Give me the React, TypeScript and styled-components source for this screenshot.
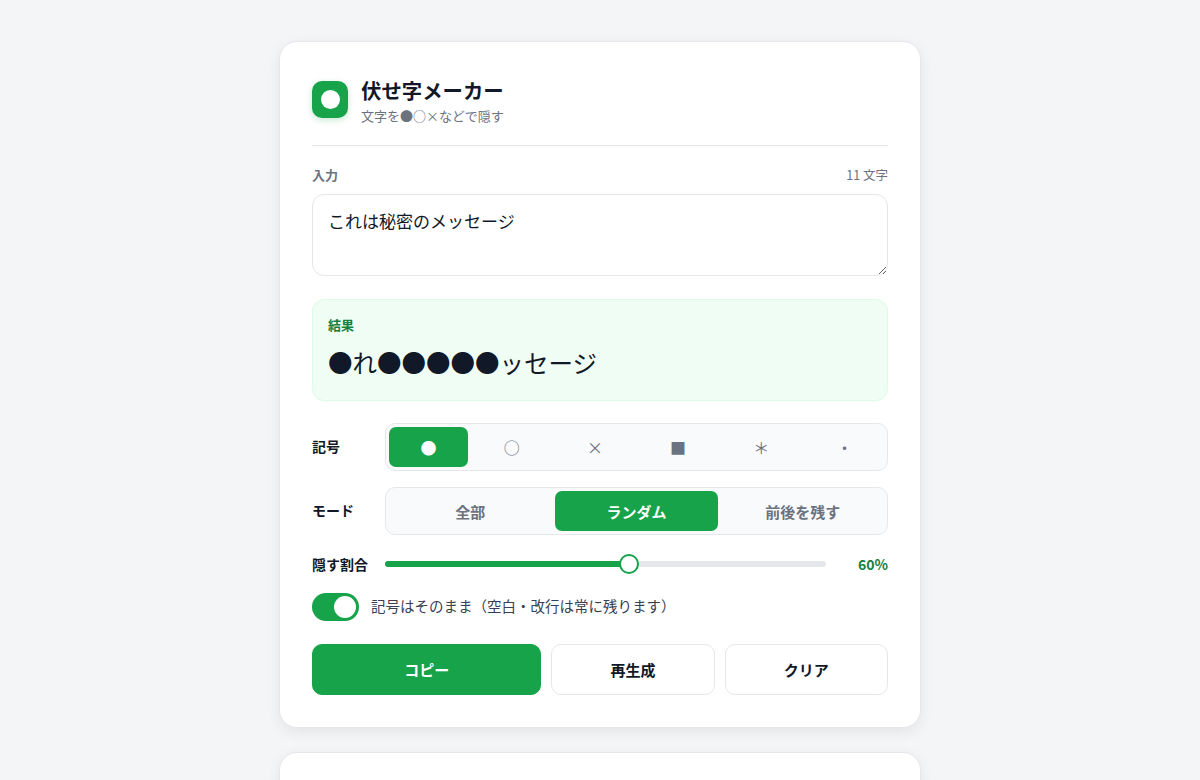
import React from "react";
import styled, { createGlobalStyle } from "styled-components";

const GlobalStyle = createGlobalStyle`
  html, body {
    margin: 0;
    padding: 0;
    background: #f4f5f7;
    height: 780px;
    overflow: hidden;
  }
  * { box-sizing: border-box; }
  body {
    font-family: "Noto Sans CJK JP", Inter, sans-serif;
    color: #111827;
  }
`;

const Page = styled.main`
  width: 642px;
  margin: 0 auto;
  padding-top: 41px;
  display: flex;
  flex-direction: column;
  gap: 24px;
`;

const Card = styled.section`
  background: #fff;
  border: 1px solid #e5e7eb;
  border-radius: 18px;
  box-shadow: 0 4px 14px rgba(0, 0, 0, 0.07);
  padding: 34px 32px 32px;
`;

const EmptyCard = styled(Card)`
  height: 200px;
  flex: none;
`;

const Header = styled.header`
  display: flex;
  align-items: flex-start;
  gap: 13px;
  padding-bottom: 20px;
  border-bottom: 1px solid #e5e7eb;
`;

const Logo = styled.div`
  width: 36px;
  height: 37px;
  margin-top: 5px;
  border-radius: 10px;
  background: #16a34a;
  box-shadow: 0 2px 6px rgba(22, 163, 74, 0.25);
  display: flex;
  align-items: center;
  justify-content: center;

  &::after {
    content: "";
    width: 19px;
    height: 19px;
    border-radius: 50%;
    background: #fff;
  }
`;

const HeaderText = styled.div`
  display: flex;
  flex-direction: column;
  gap: 2px;
`;

const Title = styled.h1`
  margin: 0;
  font-size: 20.4px;
  line-height: 28px;
  font-weight: 700;
`;

const Subtitle = styled.p`
  margin: 0;
  font-size: 13px;
  line-height: 19px;
  color: #6b7280;
`;

const FieldHead = styled.div`
  display: flex;
  justify-content: space-between;
  align-items: center;
  margin-top: 18px;
  height: 20px;
  color: #6b7280;
`;

const FieldLabel = styled.span`
  font-size: 13px;
  font-weight: 700;
`;

const CharCount = styled.span`
  font-size: 12.5px;
`;

const TextArea = styled.textarea`
  display: block;
  width: 100%;
  height: 82px;
  margin-top: 10px;
  padding: 13px 15px;
  border: 1px solid #e5e7eb;
  border-radius: 12px;
  background: #fff;
  color: #111827;
  font: 400 17px/26px "Noto Sans CJK JP", Inter, sans-serif;
  outline: none;
  resize: vertical;
`;

const ResultBox = styled.div`
  margin-top: 23px;
  height: 102px;
  padding: 15px 15px;
  background: #f0fdf4;
  border: 1px solid #dcfce7;
  border-radius: 12px;
`;

const ResultLabel = styled.div`
  font-size: 13px;
  line-height: 19px;
  font-weight: 700;
  color: #15803d;
`;

const ResultText = styled.div`
  margin-top: 11px;
  font-size: 24.5px;
  line-height: 36px;
  color: #111827;
`;

const Row = styled.div<{ $top: number }>`
  display: flex;
  align-items: center;
  margin-top: ${(p) => p.$top}px;
`;

const RowLabel = styled.span<{ $lift?: boolean }>`
  flex: 0 0 73px;
  padding-bottom: ${(p) => (p.$lift ? 2 : 0)}px;
  font-size: 14px;
  font-weight: 700;
`;

const Segments = styled.div<{ $count: number }>`
  flex: 1;
  display: grid;
  grid-template-columns: repeat(${(p) => p.$count}, 1fr);
  gap: 4px;
  height: 48px;
  padding: 3px;
  background: #f9fafb;
  border: 1px solid #e5e7eb;
  border-radius: 10px;
`;

const Segment = styled.button<{ $active?: boolean; $big?: boolean }>`
  border: 0;
  border-radius: 7px;
  padding: 0;
  background: ${(p) => (p.$active ? "#16a34a" : "transparent")};
  color: ${(p) => (p.$active ? "#fff" : "#6b7280")};
  font-family: inherit;
  font-size: ${(p) => (p.$big ? "16px" : "15px")};
  font-weight: ${(p) => (p.$big ? 400 : 700)};
  display: flex;
  align-items: center;
  justify-content: center;
`;

const SliderTrack = styled.div`
  position: relative;
  flex: 0 0 441px;
  height: 6px;
  border-radius: 3px;
  background: #e5e7eb;
`;

const SliderFill = styled.div`
  height: 100%;
  border-radius: 3px;
  background: #16a34a;
`;

const SliderThumb = styled.div`
  position: absolute;
  top: 50%;
  width: 20px;
  height: 20px;
  border-radius: 50%;
  background: #fff;
  border: 2px solid #16a34a;
  transform: translate(-50%, -50%);
`;

const SliderValue = styled.span`
  flex: 1;
  text-align: right;
  font-size: 14px;
  font-weight: 700;
  color: #15803d;
`;

const Toggle = styled.div`
  flex: 0 0 47px;
  height: 28px;
  border-radius: 14px;
  background: #16a34a;
  padding: 3px;
  display: flex;
  justify-content: flex-end;

  &::after {
    content: "";
    width: 22px;
    height: 22px;
    border-radius: 50%;
    background: #fff;
  }
`;

const ToggleLabel = styled.span`
  margin-left: 12px;
  padding-bottom: 3px;
  font-size: 14.5px;
  color: #374151;
`;

const Actions = styled.div`
  display: flex;
  gap: 10px;
  margin-top: 23px;
`;

const ActionButton = styled.button<{ $primary?: boolean }>`
  flex: ${(p) => (p.$primary ? 1.41 : 1)} 1 0;
  height: 51px;
  padding: 0;
  border-radius: 10px;
  border: 1px solid ${(p) => (p.$primary ? "#16a34a" : "#e5e7eb")};
  background: ${(p) => (p.$primary ? "#16a34a" : "#fff")};
  color: ${(p) => (p.$primary ? "#fff" : "#111827")};
  font-family: inherit;
  font-size: 15px;
  font-weight: 700;
`;

const symbols = ["●", "○", "×", "■", "＊", "・"];
const modes = ["全部", "ランダム", "前後を残す"];
const ratio = 55.3;

export default function App() {
  return (
    <Page>
      <GlobalStyle />
      <Card>
        <Header>
          <Logo />
          <HeaderText>
            <Title>伏せ字メーカー</Title>
            <Subtitle>文字を●○×などで隠す</Subtitle>
          </HeaderText>
        </Header>

        <FieldHead>
          <FieldLabel>入力</FieldLabel>
          <CharCount>11 文字</CharCount>
        </FieldHead>
        <TextArea defaultValue="これは秘密のメッセージ" />

        <ResultBox>
          <ResultLabel>結果</ResultLabel>
          <ResultText>●れ●●●●●ッセージ</ResultText>
        </ResultBox>

        <Row $top={22}>
          <RowLabel $lift>記号</RowLabel>
          <Segments $count={symbols.length}>
            {symbols.map((s, i) => (
              <Segment key={s} $big $active={i === 0}>
                {s}
              </Segment>
            ))}
          </Segments>
        </Row>

        <Row $top={16}>
          <RowLabel $lift>モード</RowLabel>
          <Segments $count={modes.length}>
            {modes.map((m, i) => (
              <Segment key={m} $active={i === 1}>
                {m}
              </Segment>
            ))}
          </Segments>
        </Row>

        <Row $top={19}>
          <RowLabel>隠す割合</RowLabel>
          <SliderTrack>
            <SliderFill style={{ width: `${ratio}%` }} />
            <SliderThumb style={{ left: `${ratio}%` }} />
          </SliderTrack>
          <SliderValue>60%</SliderValue>
        </Row>

        <Row $top={19}>
          <Toggle />
          <ToggleLabel>記号はそのまま（空白・改行は常に残ります）</ToggleLabel>
        </Row>

        <Actions>
          <ActionButton $primary>コピー</ActionButton>
          <ActionButton>再生成</ActionButton>
          <ActionButton>クリア</ActionButton>
        </Actions>
      </Card>
      <EmptyCard />
    </Page>
  );
}
